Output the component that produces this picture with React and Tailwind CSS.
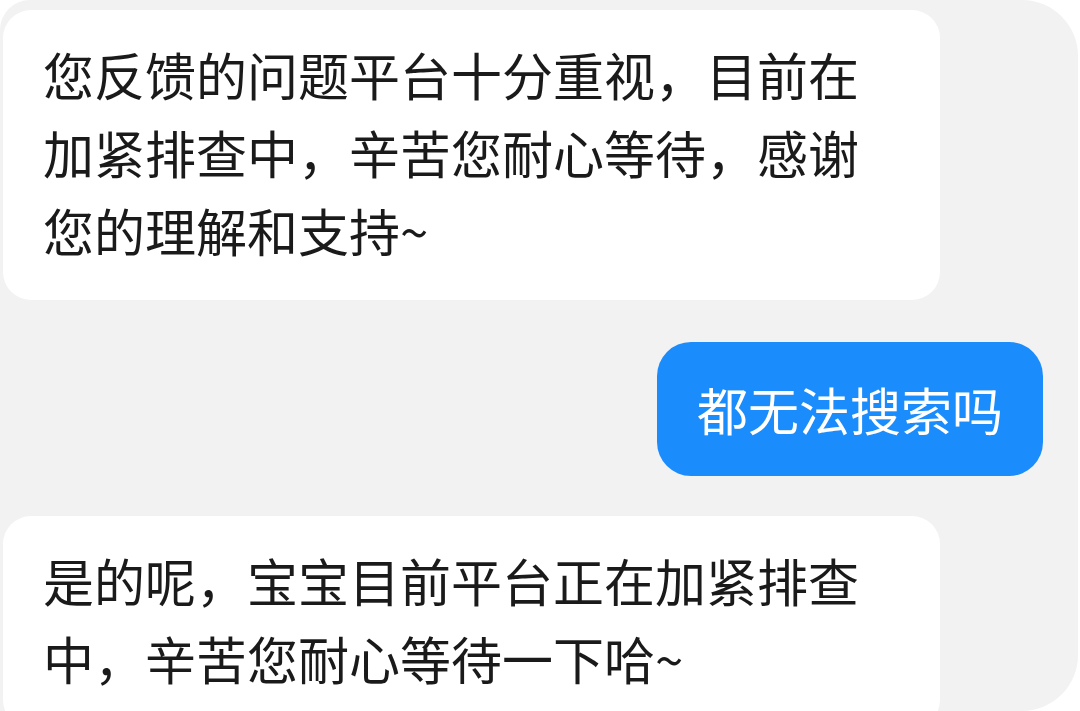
import React from 'react';

const messages = [
  {
    from: 'agent',
    lines: ['您反馈的问题平台十分重视，目前在', '加紧排查中，辛苦您耐心等待，感谢', '您的理解和支持~'],
  },
  { from: 'me', lines: ['都无法搜索吗'] },
  {
    from: 'agent',
    lines: ['是的呢，宝宝目前平台正在加紧排查', '中，辛苦您耐心等待一下哈~'],
  },
];

const AgentBubble = ({ lines }) => (
  <div className="w-[937px] shrink-0 rounded-[28px] bg-white pl-[40px] pr-4 pt-[25px] pb-[31px] text-[#1a1a1a]">
    {lines.map((line, i) => (
      <div key={i} className="h-[78px] leading-[78px] whitespace-nowrap">
        {line}
      </div>
    ))}
  </div>
);

const MyBubble = ({ lines }) => (
  <div className="flex justify-end pr-[35px]">
    <div className="h-[134px] w-[386px] rounded-[34px] bg-[#1b8cfb] flex items-center justify-center text-white">
      {lines.map((line, i) => (
        <div key={i} className="leading-[78px] whitespace-nowrap">
          {line}
        </div>
      ))}
    </div>
  </div>
);

export default function App() {
  return (
    <div className="w-[1080px] h-[711px] bg-white overflow-hidden">
      <div
        className="w-[1078px] h-[711px] bg-[#f2f2f2] rounded-tr-[56px] rounded-br-[56px] rounded-tl-[30px] overflow-hidden pl-[3px] pt-[10px] flex flex-col text-[51px]"
        style={{ fontFamily: '"Noto Sans CJK SC", "Noto Sans", sans-serif' }}
      >
        <AgentBubble lines={messages[0].lines} />
        <div className="mt-[42px]">
          <MyBubble lines={messages[1].lines} />
        </div>
        <div className="mt-[40px]">
          <AgentBubble lines={messages[2].lines} />
        </div>
      </div>
    </div>
  );
}
